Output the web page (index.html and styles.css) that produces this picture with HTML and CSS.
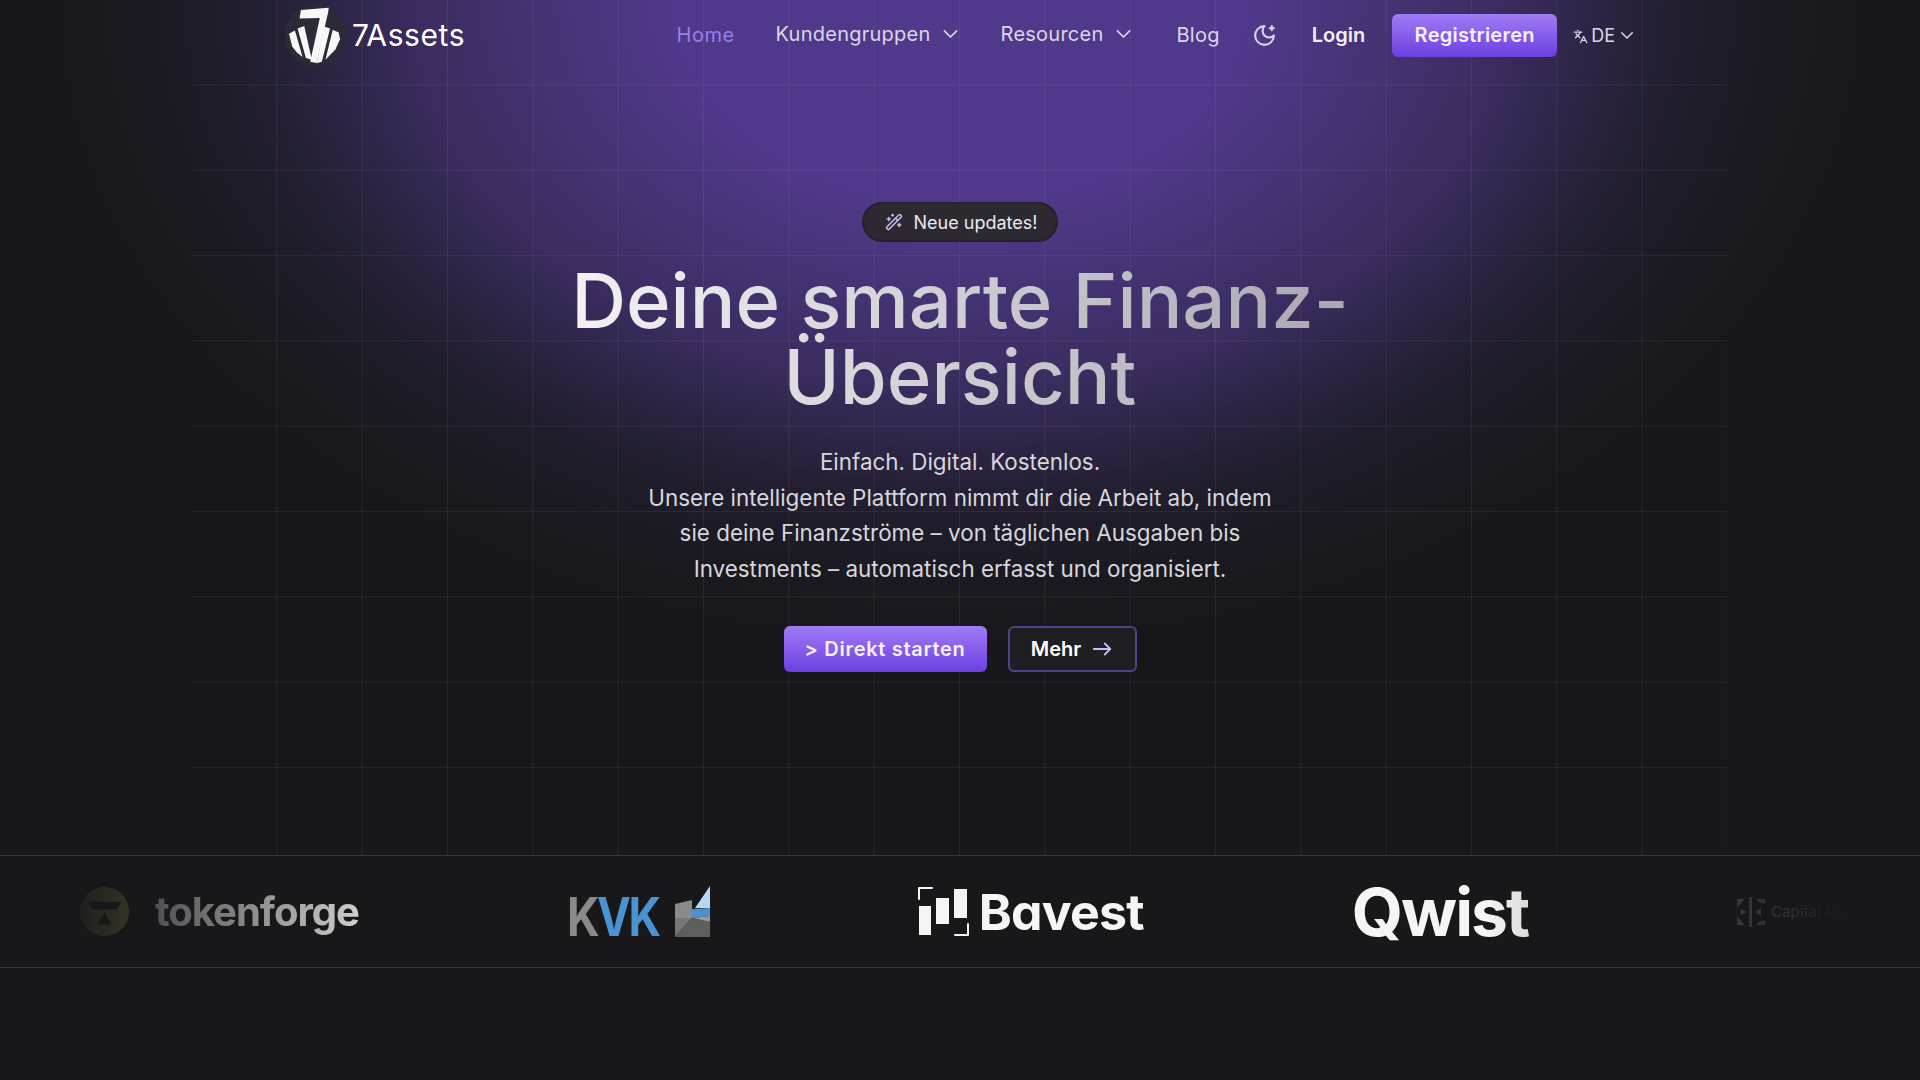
FILE: index.html
```html
<!DOCTYPE html>
<html lang="de">
<head>
  <meta charset="UTF-8">
  <title>7Assets</title>
  <meta name="viewport" content="width=device-width, initial-scale=1.0">
  <link rel="stylesheet" href="styles.css">
</head>
<body>
  <div class="glow"></div>
  <div class="grid-lines"></div>

  <header class="topbar">
    <a class="brand" href="#">
      <svg class="brand-icon" viewBox="45 10 190 190">
        <circle cx="140" cy="105" r="93" fill="#2c2a36"/>
        <g fill="#f7f7f8">
          <polygon points="96,28 180,21 178,36 143,188 124,184 153,52 92,54"/>
          <polygon points="60,100 78,90 101,170 84,156 70,139"/>
          <polygon points="86,84 106,76 129,178 111,173"/>
          <polygon points="166,78 184,84 159,184 143,189"/>
          <polygon points="192,88 210,96 214,116 200,147 170,178"/>
        </g>
      </svg>
      <span>7Assets</span>
    </a>
    <nav class="nav">
      <a class="nav-link nav-low active" href="#">Home</a>
      <a class="nav-link has-caret" href="#">Kundengruppen
        <svg class="caret" viewBox="0 0 24 24"><path d="m5 9 7 7 7-7"/></svg>
      </a>
      <a class="nav-link has-caret res" href="#">Resourcen
        <svg class="caret" viewBox="0 0 24 24"><path d="m5 9 7 7 7-7"/></svg>
      </a>
      <a class="nav-link nav-low" href="#">Blog</a>
      <svg class="moon" viewBox="0 0 24 24"><path d="M12 3a6 6 0 0 0 9 9 9 9 0 1 1-9-9Z"/><path d="M19 3v4"/><path d="M21 5h-4"/></svg>
      <a class="login" href="#">Login</a>
      <a class="btn btn-primary btn-nav" href="#">Registrieren</a>
      <div class="lang">
        <svg class="lang-icon" viewBox="0 0 24 24"><path d="m5 8 6 6"/><path d="m4 14 6-6 2-3"/><path d="M2 5h12"/><path d="M7 2h1"/><path d="m22 22-5-10-5 10"/><path d="M14 18h6"/></svg>
        <span>DE</span>
        <svg class="lang-caret" viewBox="0 0 24 24"><path d="m5 9 7 7 7-7"/></svg>
      </div>
    </nav>
  </header>

  <main class="hero">
    <div class="pill">
      <svg class="wand" viewBox="0 0 24 24"><path d="m21.64 3.64-1.28-1.28a1.21 1.21 0 0 0-1.72 0L2.36 18.64a1.21 1.21 0 0 0 0 1.72l1.28 1.28a1.2 1.2 0 0 0 1.72 0L21.64 5.36a1.2 1.2 0 0 0 0-1.72"/><path d="m14 7 3 3"/><path d="M5 6v4"/><path d="M19 14v4"/><path d="M10 2v2"/><path d="M7 8H3"/><path d="M21 16h-4"/><path d="M11 3H9"/></svg>
      Neue updates!
    </div>
    <h1>Deine smarte Finanz-<br>Übersicht</h1>
    <p class="lead">
      Einfach. Digital. Kostenlos.<br>
      Unsere intelligente Plattform nimmt dir die Arbeit ab, indem<br>
      sie deine Finanzströme – von täglichen Ausgaben bis<br>
      Investments – automatisch erfasst und organisiert.
    </p>
    <div class="actions">
      <a class="btn btn-primary btn-hero" href="#">&gt; Direkt starten</a>
      <a class="btn btn-ghost" href="#">Mehr
        <svg class="arrow" viewBox="0 0 24 24"><path d="M3 12h18"/><path d="m15 6 6 6-6 6"/></svg>
      </a>
    </div>
  </main>

  <section class="partners">
    <div class="partner-row">
      <div class="logo logo-token">
        <svg class="token-icon" viewBox="0 0 50 50">
          <circle cx="25" cy="25" r="25" fill="#b0b060"/>
          <polygon points="8,15 42,15 38,23 12,23" fill="#18181b"/>
          <polygon points="25,26 32,38 18,38" fill="#18181b"/>
        </svg>
        <span>tokenforge</span>
      </div>
      <div class="logo logo-kvk">
        <span class="kvk-text"><span class="kvk-grey">K</span><span class="kvk-blue">VK</span></span>
        <svg class="kvk-icon" viewBox="0 0 35 51">
          <polygon points="0,18 17,14 17,32 0,32" fill="#8a8a8a"/>
          <polygon points="20,22 35,0 35,22" fill="#b8d8f2"/>
          <polygon points="17,23 35,22 35,30 17,32" fill="#4a93d0"/>
          <polygon points="17,32 35,30 35,36" fill="#9a9a9a"/>
          <polygon points="0,32 17,32 0,51" fill="#777"/>
          <polygon points="17,32 35,36 35,51 0,51" fill="#5e5e5e"/>
        </svg>
      </div>
      <div class="logo logo-bavest">
        <svg class="bavest-icon" viewBox="0 0 51 49">
          <path d="M1 12V1h13M50 37v11H37" fill="none" stroke="#f5f5f5" stroke-width="2"/>
          <rect x="1" y="19" width="12" height="29" fill="#f5f5f5"/>
          <rect x="18" y="11" width="13" height="26" fill="#f5f5f5"/>
          <rect x="36" y="2" width="13" height="29" fill="#f5f5f5"/>
        </svg>
        <span>Bavest</span>
      </div>
      <div class="logo logo-qwist">Qwist</div>
      <div class="logo logo-capital">
        <svg class="capital-icon" viewBox="0 0 30 30">
          <rect x="13" y="0" width="3" height="30" fill="#8a8a8a"/>
          <polygon points="1,2 9,2 1,10" fill="#8a8a8a"/>
          <polygon points="5,12 11,15 5,18" fill="#8a8a8a"/>
          <polygon points="1,20 9,28 1,28" fill="#8a8a8a"/>
          <polygon points="20,2 29,2 29,6 24,6" fill="#8a8a8a"/>
          <polygon points="25,11 25,19 19,15" fill="#8a8a8a"/>
          <polygon points="24,24 29,24 29,28 20,28" fill="#8a8a8a"/>
        </svg>
        <span>Capital Management</span>
      </div>
    </div>
  </section>
</body>
</html>
```

FILE: styles.css
```css
:root {
  --bg: #18181b;
  --line: rgba(255, 255, 255, 0.06);
  --nav-text: #dcd6ea;
  --accent: #9b7fe8;
  --lavender: #c9bdf2;
}

* {
  box-sizing: border-box;
}

html, body {
  height: 100%;
}

body {
  margin: 0;
  position: relative;
  overflow: hidden;
  background: var(--bg);
  color: #fff;
  font-family: 'Inter', sans-serif;
}

a {
  color: inherit;
  text-decoration: none;
}

svg {
  flex: none;
  fill: none;
  stroke: currentColor;
  stroke-linecap: round;
  stroke-linejoin: round;
}

.glow {
  position: absolute;
  inset: 0 0 auto 0;
  height: 860px;
  background: radial-gradient(ellipse 900px 640px at 960px 0, #50398a 0, #50398a 32%, rgba(80, 57, 138, 0.62) 60%, rgba(80, 57, 138, 0.2) 78%, rgba(80, 57, 138, 0.05) 90%, rgba(80, 57, 138, 0) 100%);
}

.grid-lines {
  position: absolute;
  top: 0;
  left: 192px;
  width: 1536px;
  height: 855px;
}

.grid-lines::before,
.grid-lines::after {
  content: "";
  position: absolute;
  top: 0;
  left: 0;
}

/* verticals stop short of the right edge, horizontals of the logo band */
.grid-lines::before {
  width: 1535px;
  height: 855px;
  background-image: linear-gradient(to right, transparent calc(100% - 1px), var(--line) 0);
  background-size: 85.33px 100%;
}

.grid-lines::after {
  width: 1536px;
  height: 800px;
  background-image: linear-gradient(to bottom, transparent calc(100% - 1px), var(--line) 0);
  background-size: 100% 85.33px;
}

/* header */
.topbar {
  position: relative;
  display: flex;
  align-items: center;
  justify-content: space-between;
  width: 1352px;
  height: 70px;
  margin: 0 auto;
}

.brand {
  display: flex;
  align-items: center;
  gap: 5px;
  font-size: 30px;
  letter-spacing: 0.6px;
}

.brand-icon {
  width: 63px;
  height: 63px;
  stroke: none;
}

.nav {
  display: flex;
  align-items: center;
  font-size: 20px;
  letter-spacing: 0.25px;
  color: var(--nav-text);
}

.nav-link {
  display: flex;
  align-items: center;
  gap: 9px;
  margin-bottom: 3px;
  margin-right: 40px;
}

.nav-low {
  margin-bottom: 0;
}

.res {
  margin-right: 43px;
}

.active {
  color: var(--accent);
  letter-spacing: 0.5px;
  margin-right: 41px;
}

.caret {
  width: 21px;
  height: 21px;
  stroke-width: 2;
}

.moon {
  width: 25px;
  height: 25px;
  stroke-width: 2;
  margin-left: -8px;
  margin-right: 35px;
}

.login {
  font-weight: 600;
  color: #f1eef8;
  letter-spacing: 0;
  margin-right: 27px;
}

.btn {
  display: inline-flex;
  align-items: center;
  justify-content: center;
  border-radius: 6px;
  font-weight: 600;
}

.btn-primary {
  background: linear-gradient(to bottom, #a07cf6, #6c3fe0);
  color: #f5f0ff;
}

.btn-nav {
  width: 165px;
  height: 43px;
}

.lang {
  display: flex;
  align-items: center;
  gap: 3px;
  margin-left: 16px;
  font-size: 18px;
  letter-spacing: 0;
}

.lang-icon {
  width: 15px;
  height: 15px;
  stroke-width: 2;
  margin-top: 3px;
}

.lang-caret {
  width: 18px;
  height: 18px;
  stroke-width: 2;
}

/* hero */
.hero {
  position: relative;
  display: flex;
  flex-direction: column;
  align-items: center;
  height: 785px;
  padding-top: 132px;
}

.pill {
  display: flex;
  align-items: center;
  gap: 11px;
  height: 40px;
  padding: 0 19px 0 21px;
  border: 2px solid #25222c;
  border-radius: 999px;
  background: #2c2a30;
  font-size: 18px;
  color: #ebe9ef;
}

.wand {
  width: 18px;
  height: 18px;
  stroke-width: 2;
  color: var(--lavender);
}

h1 {
  margin: 20px 0 0;
  font-size: 76px;
  font-weight: 500;
  line-height: 76px;
  text-align: center;
  background: linear-gradient(to right, #f2f2f4 0, #a9a8b2 100%);
  -webkit-background-clip: text;
  background-clip: text;
  color: transparent;
}

.lead {
  margin: 30px 0 0;
  font-size: 22.4px;
  line-height: 35.5px;
  text-align: center;
  color: #d8d6dc;
}

.actions {
  display: flex;
  gap: 21px;
  margin-top: 40px;
}

.btn-hero {
  width: 203px;
  height: 46px;
  font-size: 20px;
  letter-spacing: 0.7px;
}

.btn-ghost {
  gap: 10px;
  width: 129px;
  height: 46px;
  border: 2px solid #55408f;
  background: #1f1e22;
  font-size: 20px;
}

.arrow {
  width: 22px;
  height: 22px;
  stroke-width: 2;
  color: var(--lavender);
}

/* partner logos */
.partners {
  position: relative;
  height: 113px;
  border-top: 1px solid #36363a;
  border-bottom: 1px solid #36363a;
  background: var(--bg);
  overflow: hidden;
}

.partner-row {
  display: flex;
  align-items: center;
  gap: 208px;
  height: 100%;
  margin: 0 76px 0 64px;
  padding-left: 16px;
  overflow: hidden;
  -webkit-mask-image: linear-gradient(to right, transparent, #000 20%, #000 80%, transparent);
  mask-image: linear-gradient(to right, transparent, #000 20%, #000 80%, transparent);
}

.logo {
  display: flex;
  align-items: center;
  flex: none;
  color: #f5f5f5;
}

.logo svg {
  stroke: none;
}

.logo-token {
  gap: 26px;
  font-size: 40px;
  font-weight: 700;
  letter-spacing: -1px;
}

.token-icon {
  width: 49px;
  height: 49px;
}

.logo-kvk {
  align-items: flex-end;
  gap: 18px;
}

.kvk-text {
  display: block;
  width: 90px;
  font-size: 54px;
  line-height: 40px;
  font-weight: 700;
  letter-spacing: -3px;
  white-space: nowrap;
  transform: scaleX(0.84);
  transform-origin: left center;
}

.kvk-grey {
  color: #8a8a8a;
}

.kvk-blue {
  color: #4a93d0;
}

.kvk-icon {
  width: 35px;
  height: 51px;
}

.logo-bavest {
  gap: 10px;
  font-size: 50px;
  font-weight: 700;
  letter-spacing: -0.8px;
  font-feature-settings: 'cv11';
}

.bavest-icon {
  width: 51px;
  height: 49px;
}

.logo-qwist {
  font-size: 66px;
  font-weight: 700;
  line-height: 50px;
  letter-spacing: -2px;
}

.logo-capital {
  gap: 5px;
  font-size: 15px;
  color: #aaa;
  white-space: nowrap;
}

.capital-icon {
  width: 30px;
  height: 30px;
}
```
